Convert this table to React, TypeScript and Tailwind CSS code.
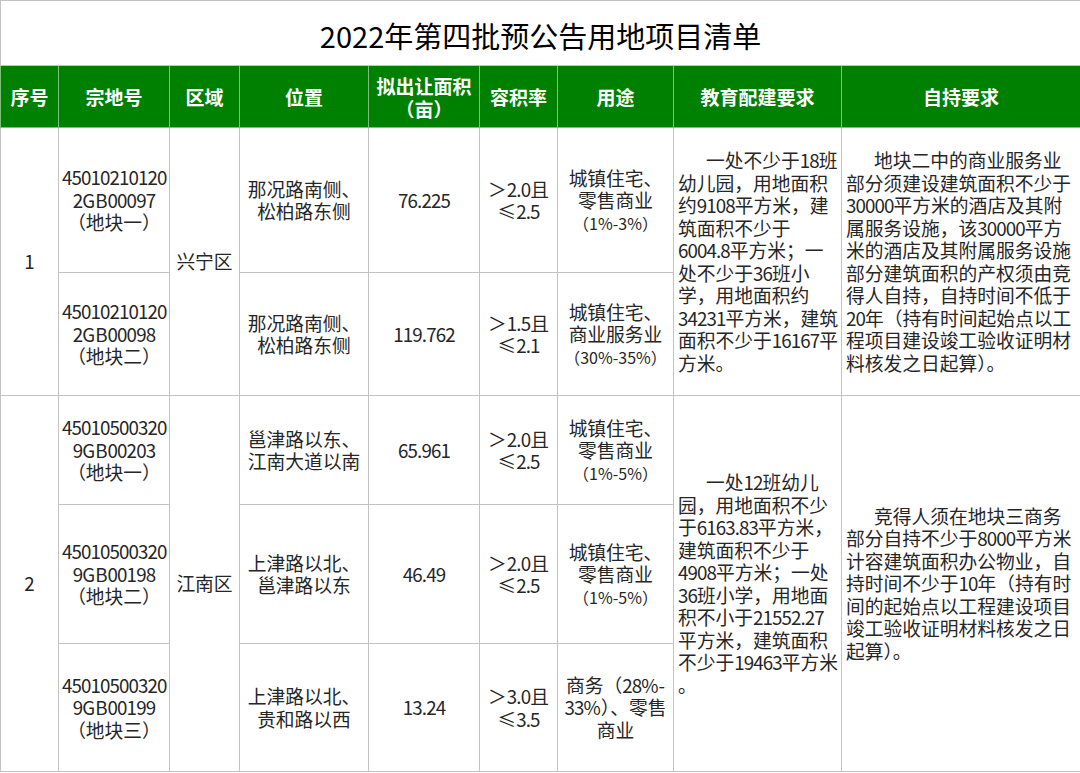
import React from 'react';

type Lot = {
  code: string[];
  place: string[];
  area: string;
  far: string[];
  use: React.ReactNode;
  h: string;
};

const cjk = "font-['Noto_Sans_CJK_SC','Noto_Sans',sans-serif]";
const cell = 'border border-[#c3c3c3] text-center align-middle px-[3px] py-0';

// digits in the source font are a little narrower than Noto's
function Num({ text }: { text: string }) {
  const parts = text.split(/([0-9][0-9.]*)/);
  return (
    <>
      {parts.map((p, i) =>
        /^[0-9]/.test(p) ? (
          <span key={i} className="tracking-[-0.9px]">
            {p}
          </span>
        ) : (
          <React.Fragment key={i}>{p}</React.Fragment>
        ),
      )}
    </>
  );
}

function Lines({ lines, indent }: { lines: string[]; indent?: boolean }) {
  return (
    <>
      {lines.map((l, i) => (
        <div key={i} className={`whitespace-nowrap ${indent && i === 0 ? 'pl-[28px]' : ''}`}>
          <Num text={l} />
        </div>
      ))}
    </>
  );
}

const eduOne = [
  '一处不少于18班',
  '幼儿园，用地面积',
  '约9108平方米，建',
  '筑面积不少于',
  '6004.8平方米；一',
  '处不少于36班小',
  '学，用地面积约',
  '34231平方米，建筑',
  '面积不少于16167平',
  '方米。',
];

const selfOne = [
  '地块二中的商业服务业',
  '部分须建设建筑面积不少于',
  '30000平方米的酒店及其附',
  '属服务设施，该30000平方',
  '米的酒店及其附属服务设施',
  '部分建筑面积的产权须由竞',
  '得人自持，自持时间不低于',
  '20年（持有时间起始点以工',
  '程项目建设竣工验收证明材',
  '料核发之日起算）。',
];

const eduTwo = [
  '一处12班幼儿',
  '园，用地面积不少',
  '于6163.83平方米，',
  '建筑面积不少于',
  '4908平方米；一处',
  '36班小学，用地面',
  '积不小于21552.27',
  '平方米，建筑面积',
  '不少于19463平方米',
  '。',
];

const selfTwo = [
  '竞得人须在地块三商务',
  '部分自持不少于8000平方米',
  '计容建筑面积办公物业，自',
  '持时间不少于10年（持有时',
  '间的起始点以工程建设项目',
  '竣工验收证明材料核发之日',
  '起算）。',
];

function Use({ a, b, pct }: { a: string; b: string; pct: string }) {
  return (
    <>
      <div className="whitespace-nowrap">{a}</div>
      <div className="whitespace-nowrap">{b}</div>
      <div className="whitespace-nowrap text-[16px] leading-[22px]">{pct}</div>
    </>
  );
}

const groupOne: Lot[] = [
  {
    code: ['45010210120', '2GB00097', '（地块一）'],
    place: ['那况路南侧、', '松柏路东侧'],
    area: '76.225',
    far: ['＞2.0且', '≤2.5'],
    use: <Use a="城镇住宅、" b="零售商业" pct="（1%-3%）" />,
    h: 'h-[145px]',
  },
  {
    code: ['45010210120', '2GB00098', '（地块二）'],
    place: ['那况路南侧、', '松柏路东侧'],
    area: '119.762',
    far: ['＞1.5且', '≤2.1'],
    use: <Use a="城镇住宅、" b="商业服务业" pct="（30%-35%）" />,
    h: 'h-[123px]',
  },
];

const groupTwo: Lot[] = [
  {
    code: ['45010500320', '9GB00203', '（地块一）'],
    place: ['邕津路以东、', '江南大道以南'],
    area: '65.961',
    far: ['＞2.0且', '≤2.5'],
    use: <Use a="城镇住宅、" b="零售商业" pct="（1%-5%）" />,
    h: 'h-[109px]',
  },
  {
    code: ['45010500320', '9GB00198', '（地块二）'],
    place: ['上津路以北、', '邕津路以东'],
    area: '46.49',
    far: ['＞2.0且', '≤2.5'],
    use: <Use a="城镇住宅、" b="零售商业" pct="（1%-5%）" />,
    h: 'h-[139px]',
  },
  {
    code: ['45010500320', '9GB00199', '（地块三）'],
    place: ['上津路以北、', '贵和路以西'],
    area: '13.24',
    far: ['＞3.0且', '≤3.5'],
    use: <Lines lines={['商务（28%-', '33%）、零售', '商业']} />,
    h: 'h-[128px]',
  },
];

const heads = ['序号', '宗地号', '区域', '位置', '', '容积率', '用途', '教育配建要求', '自持要求'];

function Group({
  no,
  district,
  lots,
  edu,
  self,
  first,
}: {
  no: string;
  district: string;
  lots: Lot[];
  edu: string[];
  self: string[];
  first?: boolean;
}) {
  const top = first ? '' : 'border-t-[#a5a5a5]';
  return (
    <>
      {lots.map((lot, i) => (
        <tr key={lot.code[1]} className={lot.h}>
          {i === 0 && (
            <td rowSpan={lots.length} className={`${cell} ${top}`}>
              {no}
            </td>
          )}
          <td className={`${cell} ${i === 0 ? top : ''}`}>
            <Lines lines={lot.code} />
          </td>
          {i === 0 && (
            <td rowSpan={lots.length} className={`${cell} ${top}`}>
              {district}
            </td>
          )}
          <td className={`${cell} ${i === 0 ? top : ''}`}>
            <Lines lines={lot.place} />
          </td>
          <td className={`${cell} ${i === 0 ? top : ''}`}>
            <Num text={lot.area} />
          </td>
          <td className={`${cell} ${i === 0 ? top : ''}`}>
            <Lines lines={lot.far} />
          </td>
          <td className={`${cell} ${i === 0 ? top : ''}`}>{lot.use}</td>
          {i === 0 && (
            <>
              <td rowSpan={lots.length} className={`${cell} ${top} !text-left !pl-[4px]`}>
                <Lines lines={edu} indent />
              </td>
              <td rowSpan={lots.length} className={`${cell} ${top} !text-left !pl-[4px]`}>
                <Lines lines={self} indent />
              </td>
            </>
          )}
        </tr>
      ))}
    </>
  );
}

export default function App() {
  return (
    <div className={`w-[1080px] h-[773px] bg-white overflow-hidden ${cjk}`}>
      <table className="w-[1080px] table-fixed border-collapse text-[18.75px] leading-[22.5px] text-[#262626]">
        <colgroup>
          <col className="w-[58px]" />
          <col className="w-[111px]" />
          <col className="w-[70px]" />
          <col className="w-[129px]" />
          <col className="w-[111px]" />
          <col className="w-[78px]" />
          <col className="w-[116px]" />
          <col className="w-[168px]" />
          <col className="w-[239px]" />
        </colgroup>
        <tbody>
          <tr className="h-[65px]">
            <td colSpan={9} className="border border-[#c3c3c3] text-center align-middle pt-[4px] text-[29px] leading-[34px] text-black">
              2022年第四批预公告用地项目清单
            </td>
          </tr>
          <tr className="h-[62px]">
            {heads.map((h, i) => (
              <th
                key={i}
                className="border border-[#7cc07c] bg-[#008000] text-white font-bold text-[19px] leading-[23px] text-center align-middle px-0"
              >
                {i === 4 ? (
                  <>
                    <div>拟出让面积</div>
                    <div>（亩）</div>
                  </>
                ) : (
                  h
                )}
              </th>
            ))}
          </tr>
          <Group no="1" district="兴宁区" lots={groupOne} edu={eduOne} self={selfOne} first />
          <Group no="2" district="江南区" lots={groupTwo} edu={eduTwo} self={selfTwo} />
        </tbody>
      </table>
    </div>
  );
}
